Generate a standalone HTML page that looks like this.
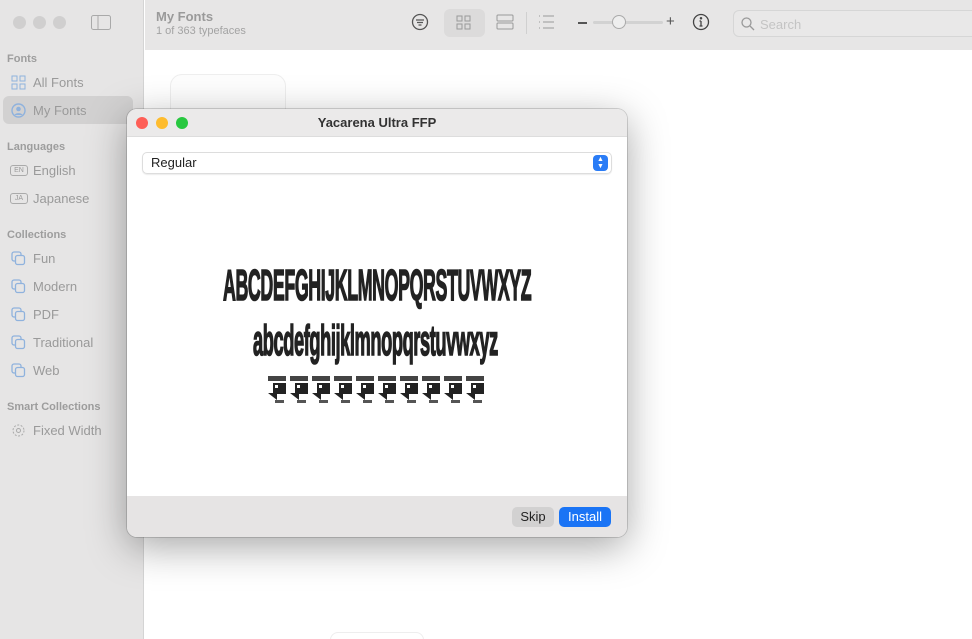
<!DOCTYPE html>
<html><head><style>
*{margin:0;padding:0;box-sizing:border-box}
html,body{width:972px;height:639px;overflow:hidden}
body{font-family:"Liberation Sans",sans-serif;background:#fff;position:relative}
.sb{position:absolute;left:0;top:0;width:144px;height:639px;background:#e6e5e5;border-right:1px solid #d4d4d4}
.tl{position:absolute;top:16px;width:13px;height:13px;border-radius:50%;background:#d0cfcf}
.hd{position:absolute;font-size:11px;font-weight:bold;color:#9d9d9d;left:7px}
.it{position:absolute;left:33px;font-size:13px;color:#9a9a9a}
.ic{position:absolute;left:11px}
.top{position:absolute;left:145px;top:0;right:0;height:50px;background:#e7e6e6}
.dlg{position:absolute;left:127px;top:109px;width:500px;height:428px;background:#fff;border-radius:10px;box-shadow:0 10px 40px rgba(0,0,0,.35),0 0 0 1px rgba(0,0,0,.15);overflow:hidden}
.big{position:absolute;font-weight:bold;color:#222;transform-origin:0 0;white-space:nowrap;letter-spacing:-1px;-webkit-text-stroke:1.6px #222}
</style></head><body>
<div class="sb">
<div class="tl" style="left:13px"></div><div class="tl" style="left:33px"></div><div class="tl" style="left:53px"></div>
<svg style="position:absolute;left:91px;top:15px" width="20" height="15"><rect x=".5" y=".5" width="19" height="14" rx="2" fill="none" stroke="#a9a9a9"/><line x1="7" y1="1" x2="7" y2="14" stroke="#a9a9a9"/></svg>
<div class="hd" style="top:53px">Fonts</div>
<svg class="ic" style="top:75px" width="15" height="15" fill="none" stroke="#8fb2dd"><rect x="1" y="1" width="5" height="5"/><rect x="9" y="1" width="5" height="5"/><rect x="1" y="9" width="5" height="5"/><rect x="9" y="9" width="5" height="5"/></svg>
<div class="it" style="top:75px">All Fonts</div>
<div style="position:absolute;left:3px;top:96px;width:130px;height:28px;background:#d2d1d1;border-radius:6px"></div>
<svg class="ic" style="top:103px" width="15" height="15"><circle cx="7.5" cy="7.5" r="6.5" fill="none" stroke="#8fb2dd" stroke-width="1.4"/><circle cx="7.5" cy="6" r="2.3" fill="#8fb2dd"/><path d="M3.5 12c1-2.5 7-2.5 8 0" fill="#8fb2dd"/></svg>
<div class="it" style="top:103px">My Fonts</div>
<div class="hd" style="top:141px">Languages</div>
<div style="position:absolute;left:10px;top:165px;width:18px;height:11px;border:1px solid #aaa;border-radius:3px;font-size:7px;color:#999;text-align:center;line-height:9px">EN</div>
<div class="it" style="top:163px">English</div>
<div style="position:absolute;left:10px;top:193px;width:18px;height:11px;border:1px solid #aaa;border-radius:3px;font-size:7px;color:#999;text-align:center;line-height:9px">JA</div>
<div class="it" style="top:191px">Japanese</div>
<div class="hd" style="top:229px">Collections</div>
<div class="it" style="top:251px">Fun</div><div class="it" style="top:279px">Modern</div><div class="it" style="top:307px">PDF</div><div class="it" style="top:335px">Traditional</div><div class="it" style="top:363px">Web</div>
<svg class="ic" style="top:251px" width="15" height="15" fill="none" stroke="#8fb2dd" stroke-width="1.3"><rect x="1" y="1" width="9" height="9" rx="2"/><rect x="4.5" y="4.5" width="9" height="9" rx="2" fill="#e6e5e5"/></svg>
<svg class="ic" style="top:279px" width="15" height="15" fill="none" stroke="#8fb2dd" stroke-width="1.3"><rect x="1" y="1" width="9" height="9" rx="2"/><rect x="4.5" y="4.5" width="9" height="9" rx="2" fill="#e6e5e5"/></svg>
<svg class="ic" style="top:307px" width="15" height="15" fill="none" stroke="#8fb2dd" stroke-width="1.3"><rect x="1" y="1" width="9" height="9" rx="2"/><rect x="4.5" y="4.5" width="9" height="9" rx="2" fill="#e6e5e5"/></svg>
<svg class="ic" style="top:335px" width="15" height="15" fill="none" stroke="#8fb2dd" stroke-width="1.3"><rect x="1" y="1" width="9" height="9" rx="2"/><rect x="4.5" y="4.5" width="9" height="9" rx="2" fill="#e6e5e5"/></svg>
<svg class="ic" style="top:363px" width="15" height="15" fill="none" stroke="#8fb2dd" stroke-width="1.3"><rect x="1" y="1" width="9" height="9" rx="2"/><rect x="4.5" y="4.5" width="9" height="9" rx="2" fill="#e6e5e5"/></svg>
<div class="hd" style="top:401px">Smart Collections</div>
<svg class="ic" style="top:423px" width="15" height="15" fill="none" stroke="#aaa"><circle cx="7.5" cy="7.5" r="5.5" stroke-dasharray="2 1.5"/><circle cx="7.5" cy="7.5" r="2"/></svg>
<div class="it" style="top:423px">Fixed Width</div>
</div>
<div class="top">
<div style="position:absolute;left:11px;top:9px;font-size:13px;font-weight:bold;color:#9a9a9a">My Fonts</div>
<div style="position:absolute;left:11px;top:25px;font-size:11px;color:#a3a3a3">1 of 363 typefaces</div>
<svg style="position:absolute;left:266px;top:13px" width="18" height="18" fill="none" stroke="#555" stroke-width="1.3"><circle cx="9" cy="9" r="7.5"/><path d="M5 7h8M6 9.5h6M7.5 12h3"/></svg>
<div style="position:absolute;left:299px;top:9px;width:41px;height:28px;background:#dcdbdb;border-radius:6px"></div>
<svg style="position:absolute;left:311px;top:15px" width="16" height="16" fill="none" stroke="#999"><rect x="1" y="1" width="5" height="5"/><rect x="9" y="1" width="5" height="5"/><rect x="1" y="9" width="5" height="5"/><rect x="9" y="9" width="5" height="5"/></svg>
<svg style="position:absolute;left:351px;top:14px" width="19" height="17" fill="none" stroke="#999"><rect x="1" y="1" width="16" height="6" rx="1"/><rect x="1" y="9" width="16" height="6" rx="1"/></svg>
<div style="position:absolute;left:381px;top:12px;width:1px;height:22px;background:#d0d0d0"></div>
<svg style="position:absolute;left:393px;top:14px" width="18" height="16" stroke="#999"><path d="M5 2h11M5 8h11M5 14h11M1 2h1M1 8h1M1 14h1"/></svg>
<div style="position:absolute;left:433px;top:22px;width:9px;height:1.5px;background:#555"></div>
<div style="position:absolute;left:448px;top:21px;width:70px;height:3px;background:#d2d2d2;border-radius:2px"></div>
<div style="position:absolute;left:467px;top:15px;width:14px;height:14px;border-radius:50%;background:#eee;border:1px solid #aaa"></div>
<div style="position:absolute;left:521px;top:13px;font-size:15px;color:#555">+</div>
<svg style="position:absolute;left:547px;top:13px" width="18" height="18" fill="none" stroke="#444" stroke-width="1.3"><circle cx="9" cy="9" r="7.5"/><path d="M9 8v5M7.5 13h3M7.5 8h1.5"/><circle cx="9" cy="5.3" r=".6" fill="#444"/></svg>
<div style="position:absolute;left:588px;top:10px;width:250px;height:27px;border:1px solid #d6d6d6;border-radius:6px;background:#e9e8e8"></div>
<svg style="position:absolute;left:596px;top:17px" width="14" height="14" fill="none" stroke="#999" stroke-width="1.3"><circle cx="5.5" cy="5.5" r="4.5"/><path d="M9 9l4 4"/></svg>
<div style="position:absolute;left:615px;top:17px;font-size:13px;color:#c4c4c4">Search</div>
</div>
<div style="position:absolute;left:170px;top:74px;width:116px;height:60px;border-radius:12px;border:1px solid #eee;background:#fdfdfd"></div>
<div style="position:absolute;left:330px;top:632px;width:94px;height:20px;border-radius:8px;border:1px solid #eee"></div>
<div class="dlg">
<div style="position:absolute;left:0;top:0;width:500px;height:28px;background:#ebeaea;border-bottom:1px solid #ddd"></div>
<div style="position:absolute;left:9px;top:8px;width:12px;height:12px;border-radius:50%;background:#fe5f57"></div>
<div style="position:absolute;left:29px;top:8px;width:12px;height:12px;border-radius:50%;background:#febc2e"></div>
<div style="position:absolute;left:49px;top:8px;width:12px;height:12px;border-radius:50%;background:#28c840"></div>
<div style="position:absolute;left:0;width:500px;top:6px;text-align:center;font-size:13px;font-weight:bold;color:#333">Yacarena Ultra FFP</div>
<div style="position:absolute;left:15px;top:43px;width:470px;height:22px;border:1px solid #ddd;border-radius:5px;box-shadow:0 1px 1px rgba(0,0,0,.08)"></div>
<div style="position:absolute;left:24px;top:46px;font-size:13px;color:#222">Regular</div>
<div style="position:absolute;left:466px;top:46px;width:15px;height:16px;background:#2a7cf6;border-radius:4px;color:#fff;font-size:7px;line-height:7px;text-align:center;padding-top:1px">▲<br>▼</div>
<div class="big" style="left:96px;top:152px;font-size:44px;transform:scaleX(.405)">ABCDEFGHIJKLMNOPQRSTUVWXYZ</div>
<div class="big" style="left:126px;top:208px;font-size:43px;transform:scaleX(.425)">abcdefghijklmnopqrstuvwxyz</div>
<div style="position:absolute;left:141px;top:267px;width:230px;height:32px">
<svg width="230" height="32"><defs><g id="g"><rect x="0" y="0" width="18" height="5" fill="#444"/><rect x="5" y="7" width="13" height="11" fill="#222"/><rect x="7" y="9" width="3" height="3" fill="#fff"/><path d="M0 17h9v7z" fill="#222"/><rect x="7" y="24" width="9" height="3" fill="#555"/></g></defs>
<use href="#g" x="0"/><use href="#g" x="22"/><use href="#g" x="44"/><use href="#g" x="66"/><use href="#g" x="88"/><use href="#g" x="110"/><use href="#g" x="132"/><use href="#g" x="154"/><use href="#g" x="176"/><use href="#g" x="198"/></svg></div>
<div style="position:absolute;left:0;top:387px;width:500px;height:41px;background:#e6e4e4"></div>
<div style="position:absolute;left:385px;top:398px;width:42px;height:20px;background:#d2d1d1;border-radius:5px;font-size:13px;color:#222;text-align:center;line-height:20px">Skip</div>
<div style="position:absolute;left:432px;top:398px;width:52px;height:20px;background:#1a74f5;border-radius:5px;font-size:13px;color:#fff;text-align:center;line-height:20px">Install</div>
</div>
</body></html>
